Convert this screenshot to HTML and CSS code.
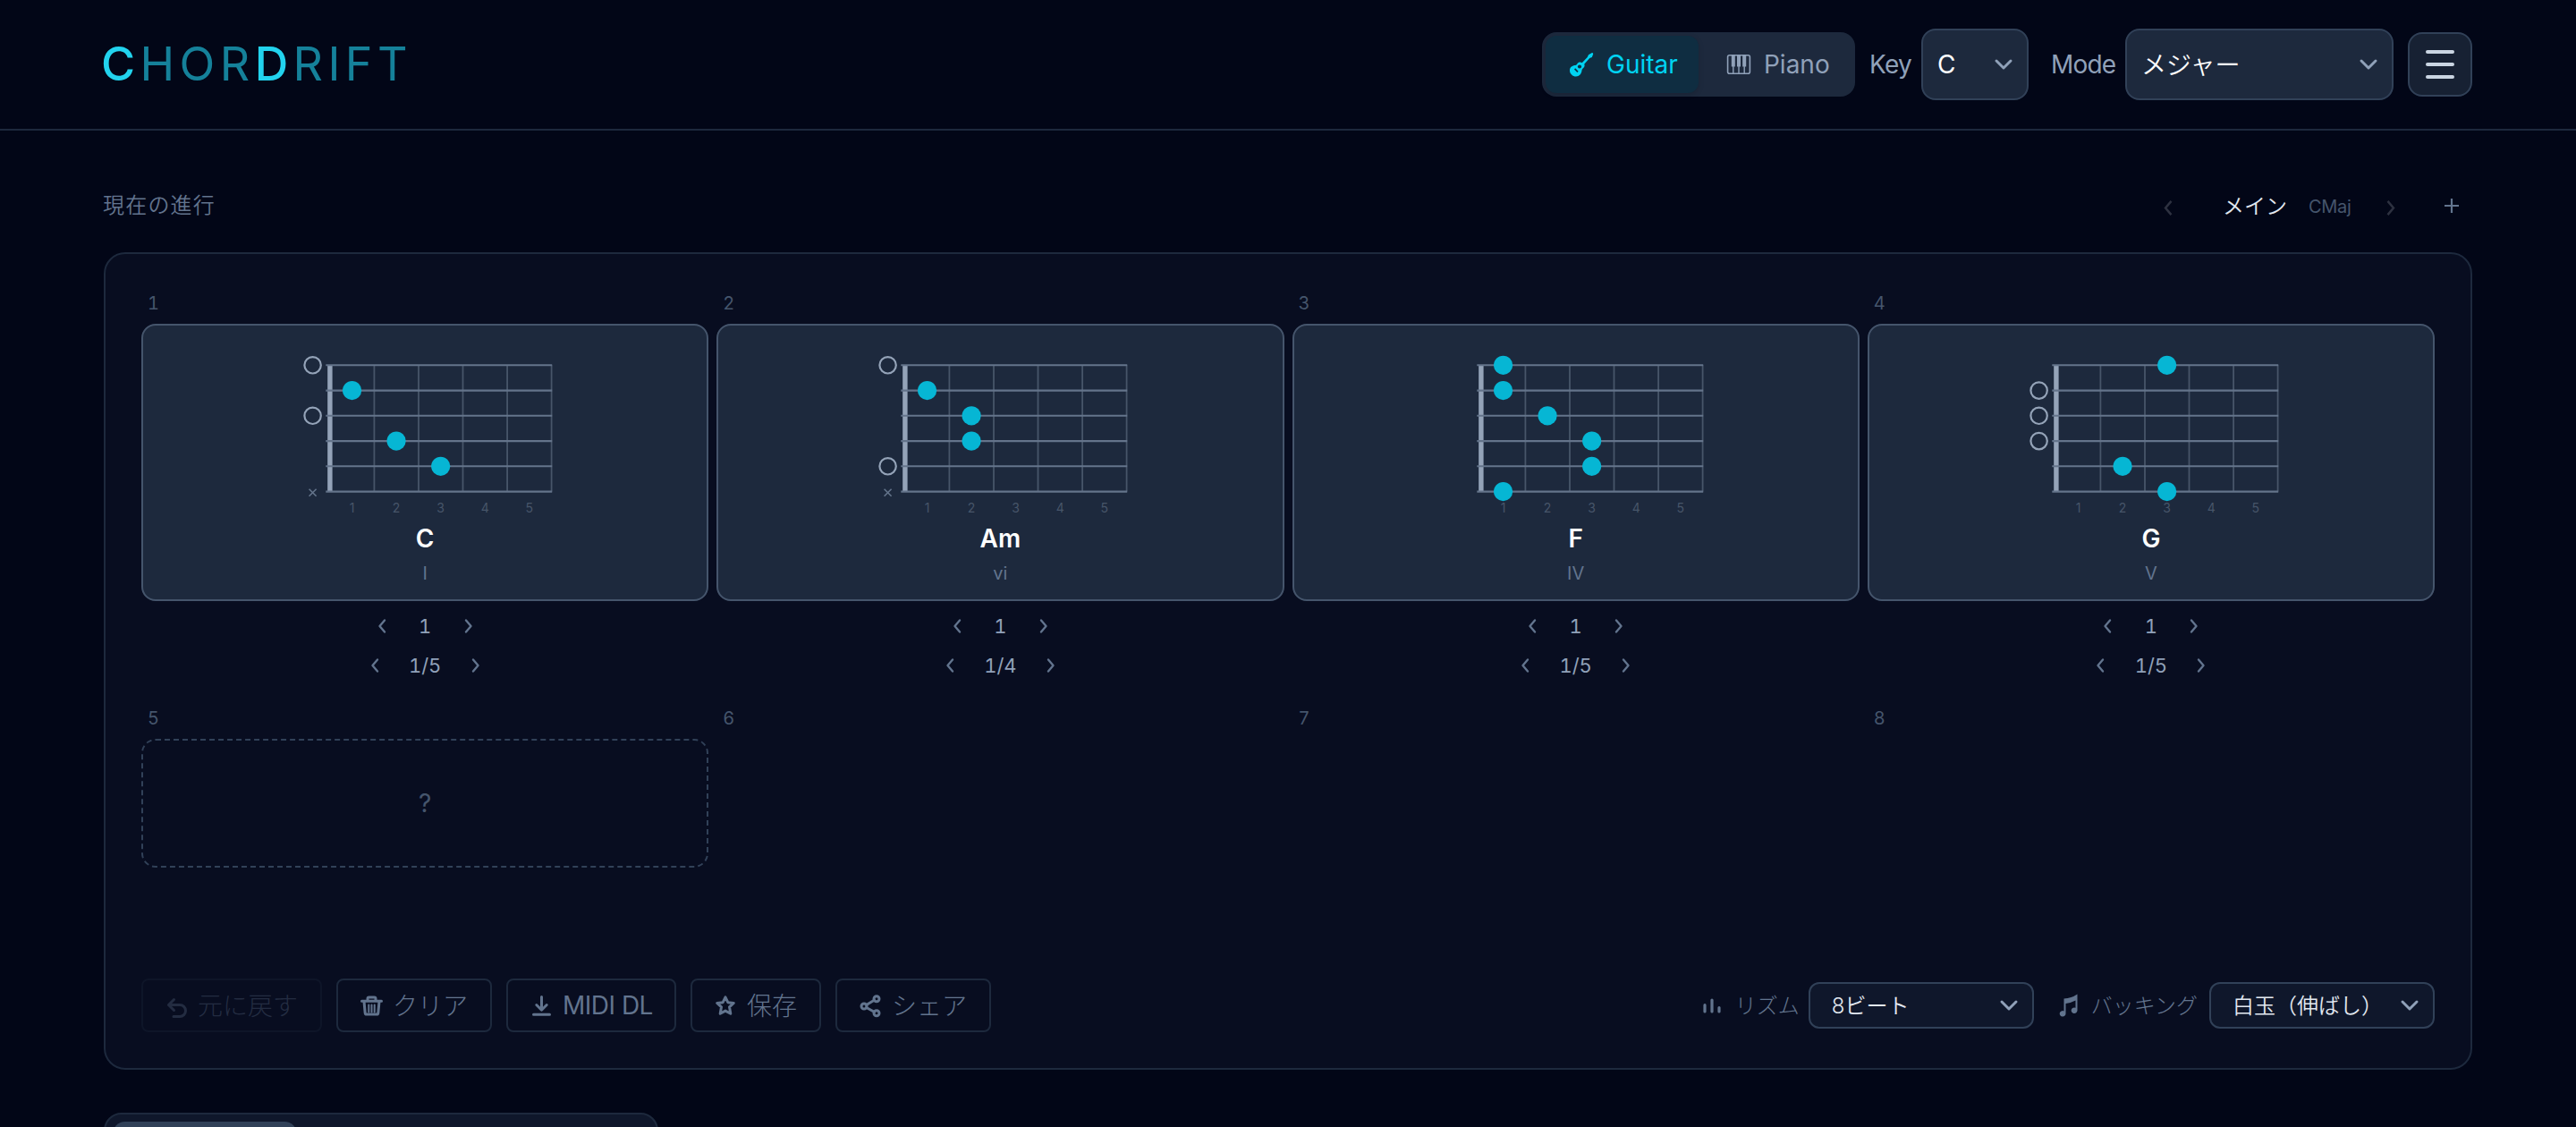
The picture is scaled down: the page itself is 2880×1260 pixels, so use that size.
FILE: index.html
```html
<!DOCTYPE html>
<html lang="ja">
<head>
  <meta charset="UTF-8">
  <title>CHORDRIFT</title>
  <link rel="stylesheet" href="styles.css">
</head>
<body>
  <!-- Shared shapes -->
  <svg class="defs" width="0" height="0">
    <symbol id="fretboard" viewBox="0 0 300 186">
      <rect x="41.2" y="14.3" width="5.4" height="141.3" fill="#94a3b8"/>
      <path d="M93.4 14.3v141.3M143 14.3v141.3M192.5 14.3v141.3M242.1 14.3v141.3M291.6 14.3v141.3" stroke="#475569" stroke-width="1.8"/>
      <path d="M39.3 14.3h252.9M39.3 42.6h252.9M39.3 70.8h252.9M39.3 99.1h252.9M39.3 127.3h252.9M39.3 155.6h252.9" stroke="#64748b" stroke-width="2.1"/>
      <g class="fret-no">
        <text x="68.6" y="179">1</text>
        <text x="118.1" y="179">2</text>
        <text x="167.7" y="179">3</text>
        <text x="217.2" y="179">4</text>
        <text x="266.8" y="179">5</text>
      </g>
    </symbol>
    <symbol id="left" viewBox="0 0 12 18"><path d="M9 2.5L3.5 9l5.5 6.5"/></symbol>
    <symbol id="right" viewBox="0 0 12 18"><path d="M3 2.5l5.5 6.5L3 15.5"/></symbol>
    <symbol id="down" viewBox="0 0 24 16"><path d="M4 4l8 8 8-8"/></symbol>
  </svg>

  <header class="header">
    <h1 class="logo"><b>C</b>HOR<b>D</b>RIFT</h1>
    <div class="controls">
      <div class="toggle">
        <button class="toggle-btn active">
          <svg width="28" height="28" viewBox="0 0 28 28">
            <path d="M25.5 1.2c1-.5 2 .6 1.6 1.6l-1.3 3.1-2.6 1.2-6 6.6c.8 1.6.3 3.4-1.2 4.5-1 .8-1.4 1.4-1.500 2.600-.3 3.600-2.900 6.700-6.500 6.700S1 24.600 1 20.700c0-3.300 2.400-5.200 5.600-5.700 1.400-.2 2.100-.6 2.700-1.600 1.200-1.900 3.600-2.400 5.400-1.200l6-6.300 1.300-2.700z" fill="currentColor"/>
            <circle cx="12" cy="16.5" r="2.1" fill="#0f2d41"/>
            <path d="M6.6 18.8l3.4 3.6" stroke="#0f2d41" stroke-width="1.7"/>
          </svg>
          <span>Guitar</span>
        </button>
        <button class="toggle-btn">
          <svg width="28" height="28" viewBox="0 0 28 28">
            <rect x="1.6" y="3.7" width="24.8" height="20.6" rx="2" fill="none" stroke="currentColor" stroke-width="1.6"/>
            <path d="M5.8 3.5h4v13h-4zM12 3.5h4v13h-4zM18.2 3.5h4v13h-4z" fill="currentColor"/>
            <path d="M7.8 16v8M14 16v8M20.2 16v8" stroke="currentColor" stroke-width="1.4"/>
          </svg>
          <span>Piano</span>
        </button>
      </div>
      <span class="label label-key">Key</span>
      <div class="select select-key"><span>C</span><svg class="chev"><use href="#down"/></svg></div>
      <span class="label label-mode">Mode</span>
      <div class="select select-mode"><span>メジャー</span><svg class="chev"><use href="#down"/></svg></div>
      <button class="menu"><i></i><i></i><i></i></button>
    </div>
  </header>

  <main class="main">
    <div class="section-head">
      <h2>現在の進行</h2>
      <div class="section-nav">
        <svg class="nav-arrow"><use href="#left"/></svg>
        <span class="section-name">メイン</span>
        <span class="section-key">CMaj</span>
        <svg class="nav-arrow"><use href="#right"/></svg>
        <svg class="nav-add" viewBox="0 0 18 18"><path d="M9 1v16M1 9h16"/></svg>
      </div>
    </div>

    <section class="panel">
      <div class="slots">
        <!-- Slot 1: C -->
        <div class="slot">
          <div class="slot-no">1</div>
          <div class="card">
            <svg class="chart" viewBox="0 0 300 186">
              <use href="#fretboard"/>
              <circle class="open" cx="24.6" cy="14.3" r="9.2"/>
              <circle class="open" cx="24.6" cy="70.8" r="9.2"/>
              <path class="mute" d="M20.6 152.7l8 8m0-8l-8 8"/>
              <circle class="dot" cx="68.6" cy="42.6" r="10.6"/>
              <circle class="dot" cx="118.1" cy="99.1" r="10.6"/>
              <circle class="dot" cx="167.7" cy="127.3" r="10.6"/>
            </svg>
            <div class="chord">C</div>
            <div class="degree">I</div>
          </div>
          <div class="pager"><svg><use href="#left"/></svg><span>1</span><svg><use href="#right"/></svg></div>
          <div class="pager voicing"><svg><use href="#left"/></svg><span>1/5</span><svg><use href="#right"/></svg></div>
        </div>
        <!-- Slot 2: Am -->
        <div class="slot">
          <div class="slot-no">2</div>
          <div class="card">
            <svg class="chart" viewBox="0 0 300 186">
              <use href="#fretboard"/>
              <circle class="open" cx="24.6" cy="14.3" r="9.2"/>
              <circle class="open" cx="24.6" cy="127.3" r="9.2"/>
              <path class="mute" d="M20.6 152.7l8 8m0-8l-8 8"/>
              <circle class="dot" cx="68.6" cy="42.6" r="10.6"/>
              <circle class="dot" cx="118.1" cy="70.8" r="10.6"/>
              <circle class="dot" cx="118.1" cy="99.1" r="10.6"/>
            </svg>
            <div class="chord">Am</div>
            <div class="degree">vi</div>
          </div>
          <div class="pager"><svg><use href="#left"/></svg><span>1</span><svg><use href="#right"/></svg></div>
          <div class="pager voicing"><svg><use href="#left"/></svg><span>1/4</span><svg><use href="#right"/></svg></div>
        </div>
        <!-- Slot 3: F -->
        <div class="slot">
          <div class="slot-no">3</div>
          <div class="card">
            <svg class="chart" viewBox="0 0 300 186">
              <use href="#fretboard"/>
              <circle class="dot" cx="68.6" cy="14.3" r="10.6"/>
              <circle class="dot" cx="68.6" cy="42.6" r="10.6"/>
              <circle class="dot" cx="118.1" cy="70.8" r="10.6"/>
              <circle class="dot" cx="167.7" cy="99.1" r="10.6"/>
              <circle class="dot" cx="167.7" cy="127.3" r="10.6"/>
              <circle class="dot" cx="68.6" cy="155.6" r="10.6"/>
            </svg>
            <div class="chord">F</div>
            <div class="degree">IV</div>
          </div>
          <div class="pager"><svg><use href="#left"/></svg><span>1</span><svg><use href="#right"/></svg></div>
          <div class="pager voicing"><svg><use href="#left"/></svg><span>1/5</span><svg><use href="#right"/></svg></div>
        </div>
        <!-- Slot 4: G -->
        <div class="slot">
          <div class="slot-no">4</div>
          <div class="card">
            <svg class="chart" viewBox="0 0 300 186">
              <use href="#fretboard"/>
              <circle class="open" cx="24.6" cy="42.6" r="9.2"/>
              <circle class="open" cx="24.6" cy="70.8" r="9.2"/>
              <circle class="open" cx="24.6" cy="99.1" r="9.2"/>
              <circle class="dot" cx="167.7" cy="14.3" r="10.6"/>
              <circle class="dot" cx="118.1" cy="127.3" r="10.6"/>
              <circle class="dot" cx="167.7" cy="155.6" r="10.6"/>
            </svg>
            <div class="chord">G</div>
            <div class="degree">V</div>
          </div>
          <div class="pager"><svg><use href="#left"/></svg><span>1</span><svg><use href="#right"/></svg></div>
          <div class="pager voicing"><svg><use href="#left"/></svg><span>1/5</span><svg><use href="#right"/></svg></div>
        </div>
        <!-- Empty slots -->
        <div class="slot">
          <div class="slot-no">5</div>
          <div class="card card-empty">?</div>
        </div>
        <div class="slot"><div class="slot-no">6</div></div>
        <div class="slot"><div class="slot-no">7</div></div>
        <div class="slot"><div class="slot-no">8</div></div>
      </div>

      <div class="toolbar">
        <div class="actions">
          <button class="btn btn-undo" disabled>
            <svg viewBox="0 0 28 28"><path d="M10.5 7.5l-6 6 6 6M4.5 13.5H17a6.500 6.500 0 0 1 0 13h-7"/></svg><span>元に戻す</span>
          </button>
          <button class="btn btn-clear">
            <svg viewBox="0 0 28 28"><path d="M2.5 9.2h22M9 9V6.500A1.500 1.500 0 0 1 10.500 5h6A1.500 1.500 0 0 1 18 6.500V9M5 9.500l1.200 13A1.800 1.800 0 0 0 8 24.100h11a1.800 1.800 0 0 0 1.800-1.600l1.200-13"/><path class="thin" d="M10.300 13.500v8M13.500 13.500v8M16.700 13.500v8"/></svg><span>クリア</span>
          </button>
          <button class="btn btn-midi">
            <svg viewBox="0 0 28 28"><path d="M13.5 4.5V19M7.800 13.500l5.700 5.700 5.700-5.700M4.500 24.200h18"/></svg><span>MIDI DL</span>
          </button>
          <button class="btn btn-save">
            <svg viewBox="0 0 28 28"><path d="M13 4.8l2.8 5.9 6.5.7-4.8 4.4 1.3 7.4-5.800-3.100-5.800 3.100 1.300-7.400-4.800-4.400 6.500-.7z"/></svg><span>保存</span>
          </button>
          <button class="btn btn-share">
            <svg viewBox="0 0 28 28"><path d="M8.7 13.5l8.600-5.200M8.700 16.500l8.600 4.800"/><circle cx="6" cy="15" r="3"/><circle cx="20" cy="6.7" r="3"/><circle cx="20" cy="22.8" r="3"/></svg><span>シェア</span>
          </button>
        </div>
        <div class="playback">
          <svg class="icon-rhythm" viewBox="0 0 24 28"><path d="M4 16.700v7.300M12 11v13M20 19.500V24"/></svg>
          <span class="label-sm">リズム</span>
          <div class="select select-sm"><span>8ビート</span><svg class="chev"><use href="#down"/></svg></div>
          <svg class="icon-note" viewBox="0 0 24 28"><path d="M5.500 6.500Q14 6 20.500 1.500v18.300a3.400 3.200 0 1 1-2-3V8.600q-5 2.800-11 3.300V23a3.400 3.200 0 1 1-2-2.600z"/></svg>
          <span class="label-sm label-backing">バッキング</span>
          <div class="select select-sm"><span>白玉（伸ばし）</span><svg class="chev"><use href="#down"/></svg></div>
        </div>
      </div>
    </section>

    <div class="tabs"><div class="tab"></div></div>
  </main>
</body>
</html>
```
FILE: styles.css
```css
* {
  box-sizing: border-box;
}
body {
  margin: 0;
  height: 1260px;
  overflow: hidden;
  background: #020617;
  color: #fff;
  font-family: Inter, "Noto Sans CJK JP", sans-serif;
  font-size: 28px;
}
h1, h2 {
  margin: 0;
  font-weight: 400;
}
button {
  margin: 0;
  padding: 0;
  border: 0;
  font: inherit;
}
svg {
  display: block;
  flex: none;
}
.defs {
  position: absolute;
}

/* Header */
.header {
  height: 146px;
  padding: 0 116px;
  border-bottom: 2px solid #1d293d;
  display: flex;
  align-items: center;
  justify-content: space-between;
}
.logo {
  margin-left: -3px;
  font-size: 52px;
  font-weight: 400;
  line-height: 60px;
  letter-spacing: 5.4px;
  color: #15819a;
}
.logo b {
  font-weight: 500;
  color: #22d3ee;
}
.controls {
  display: flex;
  align-items: center;
}
.toggle {
  display: flex;
  width: 350px;
  height: 72px;
  padding: 4px;
  border-radius: 16px;
  background: #1d293d;
}
.toggle-btn {
  display: flex;
  align-items: center;
  gap: 14px;
  width: 172px;
  padding-left: 26px;
  border-radius: 12px;
  background: none;
  color: #90a1b9;
}
.toggle-btn + .toggle-btn {
  padding-left: 31px;
}
.toggle-btn.active {
  background: #0f2d41;
  color: #00d3f2;
  box-shadow: 0 2px 6px rgba(0, 0, 0, 0.15);
}
.label {
  color: #90a1b9;
  letter-spacing: -0.8px;
}
.label-key {
  width: 58px;
  margin-left: 16px;
}
.label-mode {
  width: 83px;
  margin-left: 25px;
}
.select {
  display: flex;
  align-items: center;
  justify-content: space-between;
  height: 80px;
  padding: 0 14px 0 16px;
  border: 2px solid #314158;
  border-radius: 16px;
  background: #1d293d;
}
.select-key {
  width: 120px;
}
.select-mode {
  width: 300px;
  font-weight: 350;
}
.select-mode span {
  margin-top: -3px;
}
.chev {
  width: 24px;
  height: 16px;
  fill: none;
  stroke: #90a1b9;
  stroke-width: 3;
  stroke-linecap: round;
  stroke-linejoin: round;
}
.menu {
  display: flex;
  flex-direction: column;
  align-items: center;
  justify-content: center;
  gap: 10px;
  width: 72px;
  height: 72px;
  margin-left: 16px;
  border: 2px solid #314158;
  border-radius: 16px;
  background: #172133;
}
.menu i {
  width: 32px;
  height: 4px;
  border-radius: 2px;
  background: #cad5e2;
}

/* Section heading */
.main {
  padding: 0 116px;
}
.section-head {
  display: flex;
  align-items: center;
  justify-content: space-between;
  height: 136px;
  padding-top: 34px;
}
.section-head h2 {
  margin: 0 0 8px -1px;
  font-size: 24px;
  font-weight: 350;
  letter-spacing: 1.2px;
  color: #62748e;
}
.section-nav {
  display: flex;
  align-items: center;
}
.nav-arrow {
  width: 14px;
  height: 21px;
  margin-top: 2px;
  fill: none;
  stroke: #2d3140;
  stroke-width: 2.2;
}
.section-name {
  width: 72px;
  margin: -6px 0 0 54px;
  font-size: 24px;
  font-weight: 350;
  color: #e2e8f0;
}
.section-key {
  width: 50px;
  margin: 0 35px 0 24px;
  font-size: 20px;
  letter-spacing: -0.3px;
  color: #45556c;
}
.nav-add {
  width: 18px;
  height: 18px;
  margin: -3px 14px 0 52px;
  stroke: #62748e;
  stroke-width: 2.2;
}

/* Progression panel */
.panel {
  height: 914px;
  padding: 40px;
  border: 2px solid #1d293d;
  border-radius: 24px;
  background: #080d20;
}
.slots {
  display: grid;
  grid-template-columns: repeat(4, 1fr);
  grid-template-rows: 464px 306px;
  column-gap: 9px;
}
.slot-no {
  height: 38px;
  padding-left: 7px;
  font-size: 20px;
  line-height: 30px;
  font-variant-numeric: tabular-nums;
  color: #45556c;
}
.card {
  display: flex;
  flex-direction: column;
  align-items: center;
  height: 310px;
  padding-top: 30px;
  border: 2px solid #45556c;
  border-radius: 16px;
  background: #1d293d;
}
.card-empty {
  justify-content: center;
  height: 144px;
  padding: 0;
  border: 2px dashed #314158;
  background: none;
  color: #45556c;
}
.chart {
  width: 300px;
  height: 186px;
}
.fret-no text {
  font-size: 14px;
  text-anchor: middle;
  fill: #475569;
}
.open {
  fill: none;
  stroke: #94a3b8;
  stroke-width: 2.2;
}
.mute {
  stroke: #64748b;
  stroke-width: 1.6;
}
.dot {
  fill: #06b6d4;
}
.chord {
  margin-top: 4px;
  font-weight: 600;
  line-height: 36px;
}
.degree {
  margin-top: 7px;
  font-size: 20px;
  line-height: 28px;
  color: #62748e;
}
.pager {
  display: flex;
  align-items: center;
  justify-content: space-between;
  width: 109px;
  height: 44px;
  margin: 6px auto 0;
  font-size: 22px;
  font-variant-numeric: tabular-nums;
  color: #90a1b9;
}
.pager.voicing {
  width: 125px;
  margin-top: 0;
}
.pager svg {
  width: 12px;
  height: 18px;
  fill: none;
  stroke: #62748e;
  stroke-width: 2.4;
  stroke-linecap: round;
  stroke-linejoin: round;
}

/* Toolbar */
.toolbar {
  display: flex;
  align-items: center;
  justify-content: space-between;
  height: 60px;
}
.actions {
  display: flex;
  gap: 16px;
}
.btn {
  display: flex;
  align-items: center;
  gap: 9px;
  height: 60px;
  padding-left: 24px;
  border: 2px solid #1d293d;
  border-radius: 8px;
  background: none;
  color: #62748e;
  font-weight: 300;
  white-space: nowrap;
}
.btn:disabled {
  opacity: 0.3;
}
.btn span {
  margin-top: -3px;
}
.btn svg {
  width: 28px;
  height: 28px;
  fill: none;
  stroke: currentColor;
  stroke-width: 3;
  stroke-linecap: round;
  stroke-linejoin: round;
}
.btn .thin {
  stroke-width: 2;
}
.btn-undo { width: 202px; }
.btn-clear { width: 174px; }
.btn-midi {
  width: 190px;
  font-weight: 400;
  letter-spacing: -0.5px;
}
.btn-midi span { margin-top: 0; }
.btn-save { width: 146px; }
.btn-share { width: 174px; }
.playback {
  display: flex;
  align-items: center;
}
.label-sm {
  margin-top: -4px;
  font-size: 24px;
  font-weight: 300;
  color: #62748e;
}
.label-backing {
  margin-right: 3px;
}
.icon-rhythm {
  width: 24px;
  height: 28px;
  margin: -6px 14px 0 0;
  stroke: #62748e;
  stroke-width: 3.2;
  stroke-linecap: round;
}
.icon-note {
  width: 24px;
  height: 28px;
  margin: 0 12px 0 28px;
  fill: #62748e;
}
.select-sm {
  width: 252px;
  height: 52px;
  margin-left: 10px;
  padding: 0 14px 0 24px;
  border-radius: 12px;
  background: #0f172b;
  color: #e2e8f0;
  font-size: 24px;
  font-weight: 350;
}
.select-sm span {
  margin-top: -4px;
}

/* Tabs */
.tabs {
  width: 620px;
  height: 88px;
  margin-top: 48px;
  padding: 8px;
  border: 2px solid #1d293d;
  border-radius: 20px;
  background: #0f172b;
}
.tab {
  width: 206px;
  height: 68px;
  border-radius: 14px;
  background: #314158;
}
```
